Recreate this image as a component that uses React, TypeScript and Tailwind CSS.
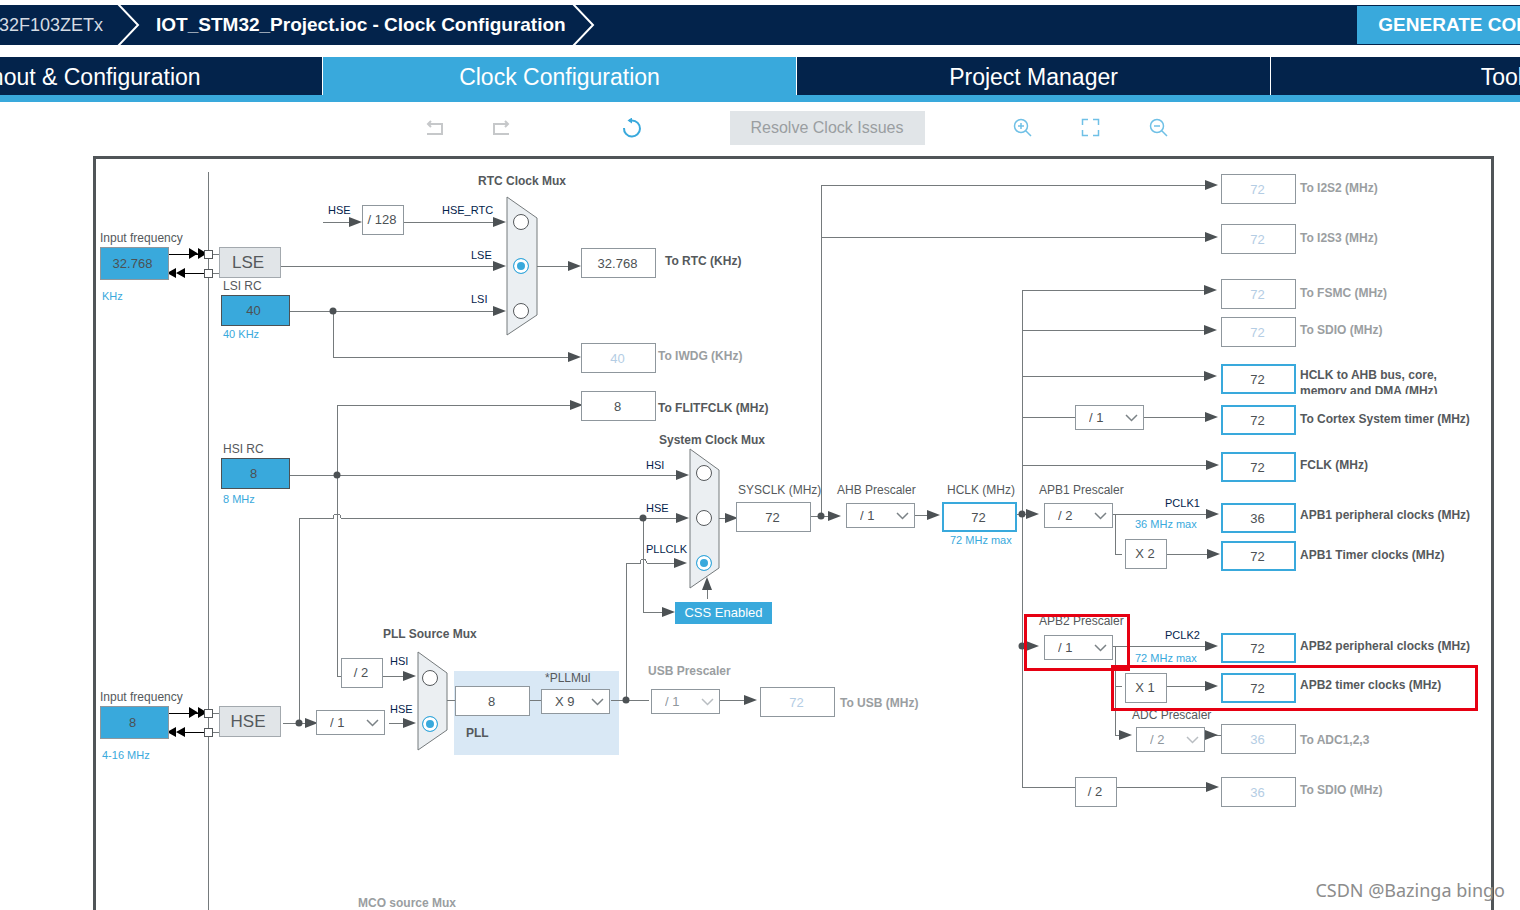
import type { ReactNode } from "react";

// Diagram coordinates are window based, the board's inner corner sits here.
const ORIGIN_X = 96;
const ORIGIN_Y = 159;

const at = (x: number, y: number) => ({ left: x - ORIGIN_X, top: y - ORIGIN_Y });

type Tone = "plain" | "muted" | "active" | "source" | "fixed";

const boxTones: Record<Tone, string> = {
  plain: "border border-[#8f979d] bg-white text-[#4c5154]",
  muted: "border border-[#8f979d] bg-white text-[#b4cde4]",
  active: "border-2 border-[#39a9dc] bg-white text-[#4c5154]",
  source: "border border-[#8f979d] bg-[#39a9dc] text-[#4c5154]",
  fixed: "border border-[#4c5154] bg-[#39a9dc] text-[#4c5154]",
};

interface ValueBox {
  name: string;
  x: number;
  y: number;
  value: string;
  tone: Tone;
}

const values: ValueBox[] = [
  { name: "RTC", x: 581, y: 248, value: "32.768", tone: "plain" },
  { name: "IWDG", x: 581, y: 343, value: "40", tone: "muted" },
  { name: "FLITFCLK", x: 581, y: 391, value: "8", tone: "plain" },
  { name: "SYSCLK", x: 736, y: 502, value: "72", tone: "plain" },
  { name: "PLL input", x: 455, y: 686, value: "8", tone: "plain" },
  { name: "USB", x: 760, y: 687, value: "72", tone: "muted" },
  { name: "I2S2", x: 1221, y: 174, value: "72", tone: "muted" },
  { name: "I2S3", x: 1221, y: 224, value: "72", tone: "muted" },
  { name: "FSMC", x: 1221, y: 279, value: "72", tone: "muted" },
  { name: "SDIO", x: 1221, y: 317, value: "72", tone: "muted" },
  { name: "AHB bus", x: 1221, y: 364, value: "72", tone: "active" },
  { name: "Cortex System timer", x: 1221, y: 405, value: "72", tone: "active" },
  { name: "FCLK", x: 1221, y: 452, value: "72", tone: "active" },
  { name: "APB1 peripheral", x: 1221, y: 503, value: "36", tone: "active" },
  { name: "APB1 timer", x: 1221, y: 541, value: "72", tone: "active" },
  { name: "APB2 peripheral", x: 1221, y: 633, value: "72", tone: "active" },
  { name: "APB2 timer", x: 1221, y: 673, value: "72", tone: "active" },
  { name: "ADC", x: 1221, y: 724, value: "36", tone: "muted" },
  { name: "SDIO half", x: 1221, y: 777, value: "36", tone: "muted" },
];

const factors = [
  { x: 362, y: 205, text: "/ 128" },
  { x: 341, y: 658, text: "/ 2" },
  { x: 1125, y: 539, text: "X 2" },
  { x: 1125, y: 673, text: "X 1" },
  { x: 1075, y: 777, text: "/ 2" },
];

const prescalers = [
  { id: "hse-div", name: "HSE divider", x: 316, y: 710, value: "/ 1", muted: false },
  { id: "pll-mul", name: "PLLMul", x: 541, y: 689, value: "X 9", muted: false },
  { id: "usb-div", name: "USB Prescaler", x: 651, y: 689, value: "/ 1", muted: true },
  { id: "ahb-div", name: "AHB Prescaler", x: 846, y: 503, value: "/ 1", muted: false },
  { id: "cortex-div", name: "Cortex Prescaler", x: 1075, y: 405, value: "/ 1", muted: false },
  { id: "apb1-div", name: "APB1 Prescaler", x: 1044, y: 503, value: "/ 2", muted: false },
  { id: "apb2-div", name: "APB2 Prescaler", x: 1044, y: 635, value: "/ 1", muted: false },
  { id: "adc-div", name: "ADC Prescaler", x: 1136, y: 727, value: "/ 2", muted: true },
];

const sources = [
  { id: "lse-frequency", y: 247, value: "32.768", range: "KHz", name: "LSE" },
  { id: "hse-frequency", y: 706, value: "8", range: "4-16 MHz", name: "HSE" },
];

type LabelKind = "text" | "title" | "off" | "signal" | "range";

const labelKinds: Record<LabelKind, string> = {
  text: "text-[12px] text-[#55595c]",
  title: "text-[12px] font-bold text-[#55595c]",
  off: "text-[12px] font-bold text-[#9a9ea1]",
  signal: "text-[11px] text-[#03234b]",
  range: "text-[11px] text-[#39a9dc]",
};

// y is the middle of the text line
const labels: { x: number; y: number; text: string; kind: LabelKind }[] = [
  { x: 223, y: 286, text: "LSI RC", kind: "text" },
  { x: 223, y: 334, text: "40 KHz", kind: "range" },
  { x: 223, y: 449, text: "HSI RC", kind: "text" },
  { x: 223, y: 499, text: "8 MHz", kind: "range" },
  { x: 478, y: 181, text: "RTC Clock Mux", kind: "title" },
  { x: 328, y: 210, text: "HSE", kind: "signal" },
  { x: 442, y: 210, text: "HSE_RTC", kind: "signal" },
  { x: 471, y: 255, text: "LSE", kind: "signal" },
  { x: 471, y: 299, text: "LSI", kind: "signal" },
  { x: 665, y: 261, text: "To RTC (KHz)", kind: "title" },
  { x: 658, y: 356, text: "To IWDG (KHz)", kind: "off" },
  { x: 658, y: 408, text: "To FLITFCLK (MHz)", kind: "title" },
  { x: 659, y: 440, text: "System Clock Mux", kind: "title" },
  { x: 646, y: 465, text: "HSI", kind: "signal" },
  { x: 646, y: 508, text: "HSE", kind: "signal" },
  { x: 646, y: 549, text: "PLLCLK", kind: "signal" },
  { x: 738, y: 490, text: "SYSCLK (MHz)", kind: "text" },
  { x: 837, y: 490, text: "AHB Prescaler", kind: "text" },
  { x: 947, y: 490, text: "HCLK (MHz)", kind: "text" },
  { x: 950, y: 540, text: "72 MHz max", kind: "range" },
  { x: 1039, y: 490, text: "APB1 Prescaler", kind: "text" },
  { x: 1165, y: 503, text: "PCLK1", kind: "signal" },
  { x: 1135, y: 524, text: "36 MHz max", kind: "range" },
  { x: 1039, y: 621, text: "APB2 Prescaler", kind: "text" },
  { x: 1165, y: 635, text: "PCLK2", kind: "signal" },
  { x: 1135, y: 658, text: "72 MHz max", kind: "range" },
  { x: 1132, y: 715, text: "ADC Prescaler", kind: "text" },
  { x: 383, y: 634, text: "PLL Source Mux", kind: "title" },
  { x: 390, y: 661, text: "HSI", kind: "signal" },
  { x: 390, y: 709, text: "HSE", kind: "signal" },
  { x: 545, y: 678, text: "*PLLMul", kind: "text" },
  { x: 466, y: 733, text: "PLL", kind: "title" },
  { x: 648, y: 671, text: "USB Prescaler", kind: "off" },
  { x: 840, y: 703, text: "To USB (MHz)", kind: "off" },
  { x: 358, y: 903, text: "MCO source Mux", kind: "off" },
  { x: 1300, y: 188, text: "To I2S2 (MHz)", kind: "off" },
  { x: 1300, y: 238, text: "To I2S3 (MHz)", kind: "off" },
  { x: 1300, y: 293, text: "To FSMC (MHz)", kind: "off" },
  { x: 1300, y: 330, text: "To SDIO (MHz)", kind: "off" },
  { x: 1300, y: 419, text: "To Cortex System timer (MHz)", kind: "title" },
  { x: 1300, y: 465, text: "FCLK (MHz)", kind: "title" },
  { x: 1300, y: 515, text: "APB1 peripheral clocks (MHz)", kind: "title" },
  { x: 1300, y: 555, text: "APB1 Timer clocks (MHz)", kind: "title" },
  { x: 1300, y: 646, text: "APB2 peripheral clocks (MHz)", kind: "title" },
  { x: 1300, y: 685, text: "APB2 timer clocks (MHz)", kind: "title" },
  { x: 1300, y: 740, text: "To ADC1,2,3", kind: "off" },
  { x: 1300, y: 790, text: "To SDIO (MHz)", kind: "off" },
];

const muxes = [
  { name: "rtc", x: 521, checked: "LSE", inputs: [["HSE_RTC", 222], ["LSE", 266], ["LSI", 311]] },
  { name: "sysclk", x: 704, checked: "PLLCLK", inputs: [["HSI", 473], ["HSE", 518], ["PLLCLK", 563]] },
  { name: "pll", x: 430, checked: "HSE", inputs: [["HSI", 678], ["HSE", 724]] },
] as const;

const wires = [
  "M208 172V910",
  "M212 254H219M212 273H219M212 713H219M212 732H219",
  "M323 222H352M404 222H495M281 266H495M290 311H495M537 266H570",
  "M333 311V357H570",
  "M290 475H678M337 676V405H572M337 676H341M383 676H405",
  "M283 723H306M299 723V518H333q0 -4 4 -4t4 4H678M389 723H405",
  "M643 518V612H664",
  "M447 700H455M530 700H541M611 700H649",
  "M626 700V563H640q0 -4 3 -4t4 4H677",
  "M707 599V588M719 518H728M811 516H830M915 515H930",
  "M720 700H746",
  "M821 516V185H1208M821 237H1208",
  "M1022 787V290H1208M1022 330H1208M1022 376H1208M1022 417H1075M1143 417H1208M1022 465H1208",
  "M1017 514H1028M1112 514H1208M1115 514V554H1122M1167 554H1210",
  "M1022 646H1028M1112 646H1208M1115 646V735H1122M1115 686H1122M1167 686H1208",
  "M1204 735H1221M1022 787H1075M1117 787H1208",
];

// arrow tips, all pointing right
const tips = [
  [362, 222], [506, 222], [506, 266], [506, 311], [581, 266], [581, 357], [583, 405],
  [689, 475], [689, 518], [687, 563], [416, 676], [416, 723], [318, 723], [675, 612],
  [738, 518], [841, 516], [940, 515], [757, 700], [1039, 514], [1039, 646],
  [1218, 185], [1218, 237], [1217, 290], [1217, 330], [1217, 376], [1218, 417],
  [1219, 465], [1219, 514], [1220, 554], [1218, 646], [1218, 686], [1132, 735],
  [1218, 735], [1219, 787],
];

const joints = [
  [333, 311], [337, 475], [299, 723], [643, 518], [626, 700], [821, 516], [1022, 514], [1022, 646],
];

const Wiring = () => (
  <svg
    className="absolute top-0 left-0"
    width="1396"
    height="751"
    viewBox="96 159 1396 751"
    aria-hidden="true"
  >
    <rect x="454" y="671" width="165" height="84" fill="#d9e8f5" />
    <g fill="none" stroke="#757a7c" shapeRendering="crispEdges">
      {wires.map((d) => (
        <path key={d} d={d} />
      ))}
    </g>
    <g fill="#ebeff2" stroke="#757a7c">
      <path d="M507 197L537 218V315L507 335Z" />
      <path d="M690 449L719 470V568L690 588Z" />
      <path d="M418 652L447 673V730L418 750Z" />
    </g>
    <g fill="#4c5154">
      {tips.map(([x, y]) => (
        <path key={`${x}-${y}`} d={`M${x} ${y}l-13 -5v10z`} />
      ))}
      <path d="M707 577l-5 13h10z" />
      {joints.map(([x, y]) => (
        <circle key={`${x}-${y}`} cx={x} cy={y} r="3.5" />
      ))}
    </g>
    {[0, 459].map((dy) => (
      <g key={dy} transform={`translate(0 ${dy})`}>
        <path d="M168 254H204M185 273H204" stroke="#000" shapeRendering="crispEdges" />
        <path d="M189 248l9 5.5l-9 5.5zM198 248l9 5.5l-9 5.5z" />
        <path d="M167 273l9 -5v10zM176 273l9 -5v10z" />
        <path
          d="M204 250h8v8h-8zM204 269h8v8h-8z"
          fill="#fff"
          stroke="#55595c"
          shapeRendering="crispEdges"
        />
      </g>
    ))}
  </svg>
);

const Prescaler = ({ id, name, x, y, value, muted }: (typeof prescalers)[number]) => (
  <div className="absolute h-[25px] w-[69px]" style={at(x, y)}>
    <select
      id={id}
      aria-label={name}
      defaultValue={value}
      disabled={muted}
      className={`size-full appearance-none border border-[#8f979d] bg-white pl-[13px] text-[13px] leading-[23px] opacity-100 ${
        muted ? "text-[#8f979d]" : "text-[#4c5154]"
      }`}
    >
      <option>{value}</option>
    </select>
    <svg
      className={`pointer-events-none absolute top-2 right-1.5 h-[9px] w-[13px] ${
        muted ? "text-[#b9bec2]" : "text-[#7b8286]"
      }`}
      viewBox="0 0 13 9"
      fill="none"
      stroke="currentColor"
      strokeWidth="1.5"
    >
      <path d="M1 2L6.5 7.5L12 2" />
    </svg>
  </div>
);

const Source = ({ id, y, value, range, name }: (typeof sources)[number]) => (
  <>
    <label
      htmlFor={id}
      className="absolute text-[12px] leading-4 whitespace-nowrap text-[#55595c]"
      style={at(100, y - 17)}
    >
      Input frequency
    </label>
    <input
      id={id}
      defaultValue={value}
      className={`absolute h-[33px] w-[69px] pr-1 text-center text-[13px] ${boxTones.source}`}
      style={at(100, y)}
    />
    <span className="absolute text-[11px] leading-4 whitespace-nowrap text-[#39a9dc]" style={at(102, y + 41)}>
      {range}
    </span>
    <div
      className="absolute flex h-[31px] w-[62px] items-center justify-center border border-[#a3a9ae] bg-[#e1e5e8] pr-1 text-[17px] text-[#55595c]"
      style={at(219, y)}
    >
      {name}
    </div>
  </>
);

const Board = () => (
  <section
    aria-label="Clock tree"
    className="relative mr-[26px] ml-[93px] h-[754px] overflow-hidden border-[3px] border-b-0 border-[#505558]"
  >
    <Wiring />

    {sources.map((source) => (
      <Source key={source.id} {...source} />
    ))}

    <output
      aria-label="LSI RC"
      className={`absolute flex h-[31px] w-[69px] items-center justify-center pr-1 text-[13px] ${boxTones.fixed}`}
      style={at(221, 295)}
    >
      40
    </output>
    <output
      aria-label="HSI RC"
      className={`absolute flex h-[31px] w-[69px] items-center justify-center pr-1 text-[13px] ${boxTones.fixed}`}
      style={at(221, 458)}
    >
      8
    </output>

    {values.map(({ name, x, y, value, tone }) => (
      <output
        key={name}
        aria-label={name}
        className={`absolute flex h-[30px] w-[75px] items-center justify-center pt-0.5 pr-0.5 text-[13px] ${boxTones[tone]}`}
        style={at(x, y)}
      >
        {value}
      </output>
    ))}

    <input
      aria-label="HCLK (MHz)"
      defaultValue="72"
      className={`absolute h-[30px] w-[75px] pr-0.5 text-center text-[13px] ${boxTones.active}`}
      style={at(942, 502)}
    />

    {factors.map(({ x, y, text }) => (
      <div
        key={`${x}-${y}`}
        className="absolute flex h-[30px] w-[42px] items-center justify-center border border-[#8f979d] bg-white pr-0.5 text-[13px] text-[#4c5154]"
        style={at(x, y)}
      >
        {text}
      </div>
    ))}

    {prescalers.map((prescaler) => (
      <Prescaler key={prescaler.id} {...prescaler} />
    ))}

    {muxes.map((mux) =>
      mux.inputs.map(([input, y]) => (
        <input
          key={`${mux.name}-${input}`}
          type="radio"
          name={mux.name}
          aria-label={`${mux.name} ${input}`}
          defaultChecked={input === mux.checked}
          className="absolute size-4 appearance-none rounded-full border border-[#55595c] bg-white checked:border-[#39a9dc] checked:bg-[#39a9dc] checked:shadow-[inset_0_0_0_3px_#fff]"
          style={at(mux.x - 8, y - 8)}
        />
      )),
    )}

    <button
      type="button"
      className="absolute h-[22px] w-[97px] bg-[#39a9dc] text-[13px] text-white"
      style={at(675, 602)}
    >
      CSS Enabled
    </button>

    {labels.map(({ x, y, text, kind }) => (
      <span
        key={`${x}-${y}`}
        className={`absolute leading-4 whitespace-nowrap ${labelKinds[kind]}`}
        style={at(x, y - 8)}
      >
        {text}
      </span>
    ))}
    <span
      className="absolute h-[27px] w-[160px] overflow-hidden text-[12px] leading-4 font-bold text-[#55595c]"
      style={at(1300, 367)}
    >
      HCLK to AHB bus, core, memory and DMA (MHz)
    </span>

    <div className="absolute h-[57px] w-[106px] border-[3px] border-[#e60012]" style={at(1024, 614)} />
    <div className="absolute h-[46px] w-[367px] border-[3px] border-[#e60012]" style={at(1111, 665)} />
  </section>
);

const Chevron = () => (
  <svg className="h-10 w-6 shrink-0" viewBox="0 0 24 40" fill="none" stroke="#fff" strokeWidth="2">
    <path d="M1 -1L21 20L1 41" />
  </svg>
);

const Header = () => (
  <header className="mt-[5px] flex h-10 items-center overflow-hidden bg-[#03234b] text-white">
    <nav aria-label="Breadcrumb" className="-ml-[39px] flex items-center text-[18px] whitespace-nowrap">
      <a href="#device" className="mr-[14px] text-[#d5dbe3]">
        STM32F103ZETx
      </a>
      <Chevron />
      <a href="#project" className="mr-[6px] ml-[15px] text-[19px] font-bold">
        IOT_STM32_Project.ioc - Clock Configuration
      </a>
      <Chevron />
    </nav>
    <button
      type="button"
      className="-mr-[44px] ml-auto h-[38px] w-[207px] shrink-0 bg-[#39a9dc] text-[19px] font-bold whitespace-nowrap"
    >
      GENERATE CODE
    </button>
  </header>
);

const tabs = ["Pinout & Configuration", "Clock Configuration", "Project Manager", "Tools"];

const Tabs = () => (
  <div className="mt-3 overflow-hidden border-b-[7px] border-[#39a9dc]">
    <div role="tablist" className="-mr-[225px] -ml-[151px] flex">
      {tabs.map((tab) => (
        <button
          key={tab}
          type="button"
          role="tab"
          aria-selected={tab === "Clock Configuration"}
          className="h-[38px] flex-1 border-r border-white bg-[#03234b] pt-0.5 text-[23px] whitespace-nowrap text-white aria-selected:bg-[#39a9dc]"
        >
          {tab}
        </button>
      ))}
    </div>
  </div>
);

const Tool = ({ label, className = "", children }: { label: string; className?: string; children: ReactNode }) => (
  <button type="button" aria-label={label} className={`size-5 ${className}`}>
    <svg viewBox="0 0 20 20" fill="none" stroke="currentColor" className="size-5">
      {children}
    </svg>
  </button>
);

const Toolbar = () => (
  <div className="flex h-[54px] items-center justify-center pb-0.5 pl-[72px]">
    <div className="flex gap-12">
      <Tool label="Undo" className="text-[#c6c8ca]">
        <path strokeWidth="2" d="M7 3L4 6L7 9M4 6H18V16H3" />
      </Tool>
      <Tool label="Redo" className="text-[#c6c8ca]">
        <path strokeWidth="2" d="M13 3L16 6L13 9M16 6H2V16H17" />
      </Tool>
    </div>
    <Tool label="Refresh" className="ml-[110px] text-[#39a9dc]">
      <path strokeWidth="2" d="M7 2.5H10A8 8 0 1 1 2 10" />
      <path fill="currentColor" stroke="none" d="M5.5 2.5L10 -0.5V5.5Z" />
    </Tool>
    <button
      type="button"
      disabled
      className="mx-[88px] h-[34px] w-[195px] bg-[#e1e5e8] text-[16px] whitespace-nowrap text-[#9a9ea1]"
    >
      Resolve Clock Issues
    </button>
    <div className="flex gap-12 text-[#6fc0e6]">
      <Tool label="Zoom in">
        <path
          strokeWidth="1.5"
          d="M8 1.5a6.5 6.5 0 1 0 0 13a6.500 6.500 0 0 0 0 -13M13 13L18 18M5 8H11M8 5V11"
        />
      </Tool>
      <Tool label="Fit to screen">
        <path strokeWidth="1.5" d="M1.500 7V1.500H7M12 1.500H17.500V7M17.500 12V17.500H12M7 17.500H1.500V12" />
      </Tool>
      <Tool label="Zoom out">
        <path strokeWidth="1.5" d="M8 1.5a6.5 6.5 0 1 0 0 13a6.5 6.5 0 0 0 0 -13M13 13L18 18M5 8H11" />
      </Tool>
    </div>
  </div>
);

export default function App() {
  return (
    <div className="relative overflow-hidden bg-white font-['Liberation_Sans',Arial,sans-serif]">
      <Header />
      <Tabs />
      <Toolbar />
      <Board />
      <p className="absolute right-[15px] bottom-2 font-['Noto_Sans',sans-serif] text-[18px] leading-6 text-[#8c8c8c]">
        CSDN @Bazinga bingo
      </p>
    </div>
  );
}
